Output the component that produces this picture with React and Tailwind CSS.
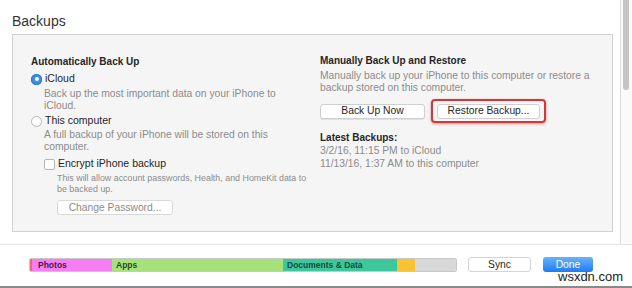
import React from "react";

function Radio({ checked }) {
  return checked ? (
    <span className="w-[11px] h-[11px] rounded-full bg-[#3d8fe0] flex items-center justify-center shrink-0 shadow-[inset_0_0_0_1px_#2f7ad0]">
      <span className="w-[4px] h-[4px] rounded-full bg-white" />
    </span>
  ) : (
    <span className="w-[11px] h-[11px] rounded-full bg-white border border-[#b5b5b5] shrink-0" />
  );
}

export default function App() {
  return (
    <div className="w-[632px] h-[288px] bg-white overflow-hidden flex flex-col font-['Liberation_Sans',Arial,sans-serif] text-[#2a2a2a]">
      <div className="flex h-[245px] border-b border-[#e3e3e3]">
        <div className="flex-1 pl-[12px] pr-[7px] flex flex-col">
          <div className="h-[34px] flex items-center text-[14px] text-[#333] pt-[9px]">Backups</div>
          <div className="h-[198px] bg-[#f5f5f5] border border-[#d2d2d2] flex">
            <div className="w-[307px] pl-[18px] pt-[20px] flex flex-col">
              <div className="text-[10px] font-bold leading-[14px] text-[#262626]">Automatically Back Up</div>
              <div className="flex items-center gap-[3px] mt-[3px] h-[14px]">
                <Radio checked />
                <span className="text-[10.5px] text-[#262626]">iCloud</span>
              </div>
              <div className="pl-[13px] text-[10.3px] leading-[12px] text-[#8c8c8c] mt-[2px] whitespace-nowrap">
                Back up the most important data on your iPhone to
                <br />
                iCloud.
              </div>
              <div className="flex items-center gap-[3px] mt-[2px] h-[14px]">
                <Radio />
                <span className="text-[10.5px] text-[#262626]">This computer</span>
              </div>
              <div className="pl-[13px] text-[10.3px] leading-[12px] text-[#8c8c8c] mt-[1px] whitespace-nowrap">
                A full backup of your iPhone will be stored on this
                <br />
                computer.
              </div>
              <div className="pl-[13px] flex items-center gap-[3px] mt-[4px] h-[14px]">
                <span className="w-[11px] h-[11px] rounded-[2px] bg-white border border-[#b5b5b5] shrink-0" />
                <span className="text-[10.5px] text-[#262626]">Encrypt iPhone backup</span>
              </div>
              <div className="pl-[26px] text-[8.9px] leading-[10.5px] text-[#8c8c8c] mt-[2px] whitespace-nowrap">
                This will allow account passwords, Health, and HomeKit data to
                <br />
                be backed up.
              </div>
              <div className="pl-[26px] mt-[6px]">
                <div className="w-[116px] h-[15px] bg-white border border-[#d8d8d8] rounded-[3px] flex items-center justify-center text-[10.3px] text-[#8c8c8c]">
                  Change Password...
                </div>
              </div>
            </div>
            <div className="flex-1 pt-[19px] flex flex-col">
              <div className="text-[10px] font-bold leading-[14px] text-[#262626]">Manually Back Up and Restore</div>
              <div className="text-[10.3px] leading-[12px] text-[#8c8c8c] mt-[2px] whitespace-nowrap">
                Manually back up your iPhone to this computer or restore a
                <br />
                backup stored on this computer.
              </div>
              <div className="flex items-center mt-[5px] h-[24px]">
                <div className="w-[105px] h-[15px] bg-white border border-[#cfcfcf] rounded-[3px] flex items-center justify-center text-[10.3px] text-[#262626] shadow-[0_1px_0_#e0e0e0]">
                  Back Up Now
                </div>
                <div className="ml-[6px] w-[115px] h-[24px] border-2 border-[#d2373b] rounded-[4px] flex items-center justify-center shadow-[0_1px_3px_rgba(160,30,30,0.45)]">
                  <div className="w-[103px] h-[15px] bg-white border border-[#cfcfcf] rounded-[3px] flex items-center justify-center text-[10.3px] text-[#262626]">
                    Restore Backup...
                  </div>
                </div>
              </div>
              <div className="text-[10px] font-bold leading-[14px] text-[#262626] mt-[8px]">Latest Backups:</div>
              <div className="text-[10.3px] leading-[12.5px] text-[#8c8c8c]">
                3/2/16, 11:15 PM to iCloud
                <br />
                11/13/16, 1:37 AM to this computer
              </div>
            </div>
          </div>
        </div>
        <div className="w-[12px] border-l border-[#dcdcdc] bg-[#fafafa] pl-[2px]">
          <div className="w-[6px] h-[90px] bg-[#c4c4c4] rounded-b-[3px]" />
        </div>
      </div>
      <div className="flex-1 flex flex-col">
        <div className="flex-1 flex items-start pt-[13px] pl-[29px]">
          <div className="w-[428px] h-[14px] flex rounded-[2px] overflow-hidden border border-[#c8c8c8] text-[8.5px] font-bold leading-none">
            <div className="w-[2px] bg-[#ef6b6b]" />
            <div className="w-[80px] bg-[#f47ef2] flex items-center pl-[6px] text-[#4a1a4a]">Photos</div>
            <div className="w-[171px] bg-[#a6e27c] flex items-center pl-[4px] text-[#2b4a1b]">Apps</div>
            <div className="w-[114px] bg-[#3ec79c] flex items-center pl-[4px] text-[#154a3a]">Documents &amp; Data</div>
            <div className="w-[18px] bg-[#f8c331]" />
            <div className="flex-1 bg-[#d8d8d8]" />
          </div>
          <div className="ml-[11px] w-[63px] h-[15px] bg-white border border-[#d4d4d4] rounded-[3px] flex items-center justify-center text-[10.3px] text-[#262626] -mt-[1px]">
            Sync
          </div>
          <div className="ml-[12px] w-[50px] h-[15px] rounded-[3px] bg-gradient-to-b from-[#69b1fa] to-[#1b7bf0] flex items-center justify-center text-[10.3px] text-white -mt-[1px] relative">
            Done
            <span className="absolute left-[15px] top-[13px] text-[13px] text-[#222] whitespace-nowrap leading-[14px]">wsxdn.com</span>
          </div>
        </div>
        <div className="h-[2px] bg-[#8a8a8a]" />
      </div>
    </div>
  );
}
